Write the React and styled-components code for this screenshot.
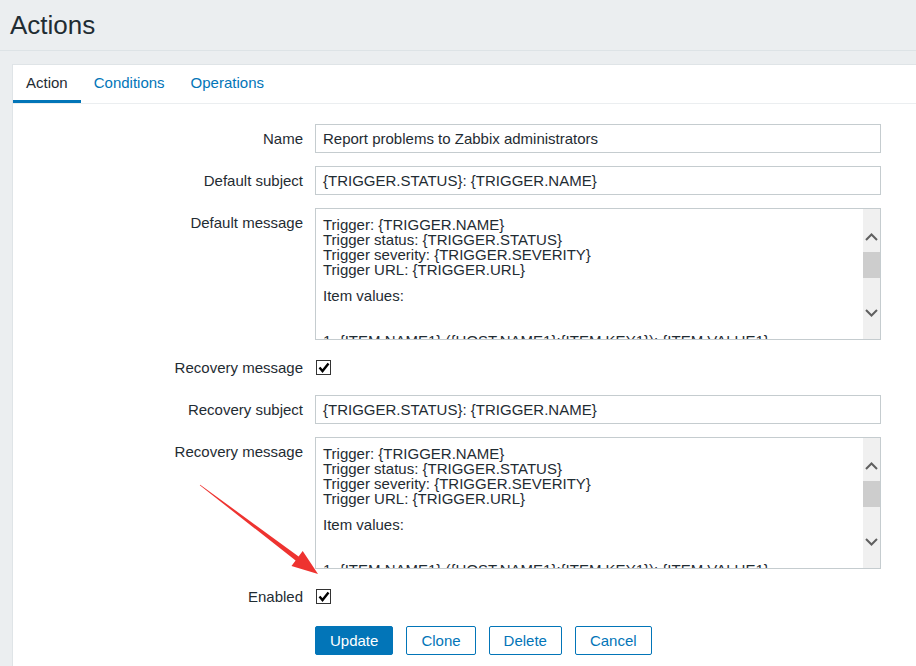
import React from "react";
import styled, { createGlobalStyle } from "styled-components";

const GlobalStyle = createGlobalStyle`
  html, body {
    margin: 0;
    padding: 0;
    background: #ebeef0;
    font-family: "Liberation Sans", Arial, sans-serif;
    color: #1f2c33;
    overflow: hidden;
  }
`;

const Page = styled.div`
  position: relative;
  width: 916px;
  height: 666px;
  overflow: hidden;
`;

const Header = styled.header`
  height: 50px;
  display: flex;
  align-items: center;
  padding-left: 10px;
  border-bottom: 1px solid #dde3e6;
`;

const Title = styled.h1`
  margin: 0;
  font-size: 26px;
  font-weight: normal;
  color: #1f2c33;
`;

const Panel = styled.main`
  margin: 13px 0 0 12px;
  background: #fff;
  border: 1px solid #dfe4e7;
  border-right: none;
  height: 620px;
`;

const TabBar = styled.nav`
  display: flex;
  height: 38px;
  border-bottom: 1px solid #ebeef0;
`;

const Tab = styled.a`
  display: flex;
  align-items: center;
  padding: 0 13px;
  font-size: 15px;
  color: ${(p) => (p.$active ? "#1f2c33" : "#0275b8")};
  border-bottom: 3px solid ${(p) => (p.$active ? "#0275b8" : "transparent")};
  text-decoration: none;
`;

const Form = styled.form`
  display: grid;
  grid-template-columns: 290px 566px;
  column-gap: 12px;
  row-gap: 13px;
  padding-top: 20px;
`;

const Label = styled.label`
  text-align: right;
  font-size: 15px;
  line-height: 29px;
  color: #1f2c33;
`;

const TextInput = styled.div`
  box-sizing: border-box;
  height: 29px;
  border: 1px solid #c5cccf;
  padding: 0 7px;
  font-size: 15px;
  line-height: 27px;
  color: #1f2c33;
  white-space: nowrap;
  overflow: hidden;
`;

const MessageBox = styled.div`
  box-sizing: border-box;
  height: 132px;
  border: 1px solid #c5cccf;
  display: flex;
  overflow: hidden;
`;

const MessageText = styled.div`
  flex: 1;
  padding: 8px 7px 0;
  font-size: 15px;
  line-height: 15px;
  color: #1f2c33;
  white-space: nowrap;
  overflow: hidden;
`;

const Blank = styled.div`
  height: ${(p) => p.$h}px;
`;

const Scrollbar = styled.div`
  box-sizing: border-box;
  width: 17px;
  background: #f0f0f0;
  display: flex;
  flex-direction: column;
  align-items: center;
  padding: 23px 0 21px;
`;

const Thumb = styled.div`
  width: 100%;
  height: 26px;
  margin-top: 10px;
  background: #cdcdcd;
`;

const Grow = styled.div`
  flex: 1;
`;

const CheckCell = styled.div`
  display: flex;
  align-items: center;
  height: 29px;
`;

const CheckBox = styled.span`
  box-sizing: border-box;
  width: 15px;
  height: 15px;
  margin-left: 1px;
  border: 1px solid #333;
  background: #fff;
  display: flex;
  align-items: center;
  justify-content: center;
`;

const Buttons = styled.div`
  display: flex;
  gap: 13px;
  margin-top: 2px;
`;

const Button = styled.button`
  box-sizing: border-box;
  height: 29px;
  padding: 0 14px;
  border-radius: 2px;
  border: 1px solid #0275b8;
  background: ${(p) => (p.$primary ? "#0275b8" : "#fff")};
  color: ${(p) => (p.$primary ? "#fff" : "#0275b8")};
  font-family: "Liberation Sans", Arial, sans-serif;
  font-size: 15px;
`;

const Overlay = styled.svg`
  position: absolute;
  left: 0;
  top: 0;
  pointer-events: none;
`;

const Chevron = ({ up }) => (
  <svg width="13" height="10" viewBox="0 0 13 10">
    <path
      d={up ? "M1 8 L6.5 2.5 L12 8" : "M1 2 L6.5 7.5 L12 2"}
      fill="none"
      stroke="#606060"
      strokeWidth="2"
    />
  </svg>
);

const Check = () => (
  <svg width="12" height="11" viewBox="0 0 12 11">
    <path d="M1.5 5.5 L4.5 9 L10.5 1.5" fill="none" stroke="#000" strokeWidth="2.4" />
  </svg>
);

const messageLines = [
  "Trigger: {TRIGGER.NAME}",
  "Trigger status: {TRIGGER.STATUS}",
  "Trigger severity: {TRIGGER.SEVERITY}",
  "Trigger URL: {TRIGGER.URL}",
];

const Message = () => (
  <MessageBox>
    <MessageText>
      {messageLines.map((l) => (
        <div key={l}>{l}</div>
      ))}
      <Blank $h={11} />
      <div>Item values:</div>
      <Blank $h={30} />
      <div>1. {"{ITEM.NAME1}"} ({"{HOST.NAME1}"}:{"{ITEM.KEY1}"}): {"{ITEM.VALUE1}"}</div>
    </MessageText>
    <Scrollbar>
      <Chevron up />
      <Thumb />
      <Grow />
      <Chevron />
    </Scrollbar>
  </MessageBox>
);

export default function App() {
  return (
    <Page>
      <GlobalStyle />
      <Header>
        <Title>Actions</Title>
      </Header>
      <Panel>
        <TabBar>
          <Tab $active>Action</Tab>
          <Tab>Conditions</Tab>
          <Tab>Operations</Tab>
        </TabBar>
        <Form>
          <Label>Name</Label>
          <TextInput>Report problems to Zabbix administrators</TextInput>

          <Label>Default subject</Label>
          <TextInput>{"{TRIGGER.STATUS}: {TRIGGER.NAME}"}</TextInput>

          <Label>Default message</Label>
          <Message />

          <Label>Recovery message</Label>
          <CheckCell>
            <CheckBox>
              <Check />
            </CheckBox>
          </CheckCell>

          <Label>Recovery subject</Label>
          <TextInput>{"{TRIGGER.STATUS}: {TRIGGER.NAME}"}</TextInput>

          <Label>Recovery message</Label>
          <Message />

          <Label>Enabled</Label>
          <CheckCell>
            <CheckBox>
              <Check />
            </CheckBox>
          </CheckCell>

          <span />
          <Buttons>
            <Button type="button" $primary>Update</Button>
            <Button type="button">Clone</Button>
            <Button type="button">Delete</Button>
            <Button type="button">Cancel</Button>
          </Buttons>
        </Form>
      </Panel>
      <Overlay width="916" height="666">
        <polygon
          points="199.8,485.3 295.6,560.5 291.5,566 318,574 302.7,551 298.6,556.5 200.2,484.7"
          fill="#ee3330"
        />
      </Overlay>
    </Page>
  );
}
